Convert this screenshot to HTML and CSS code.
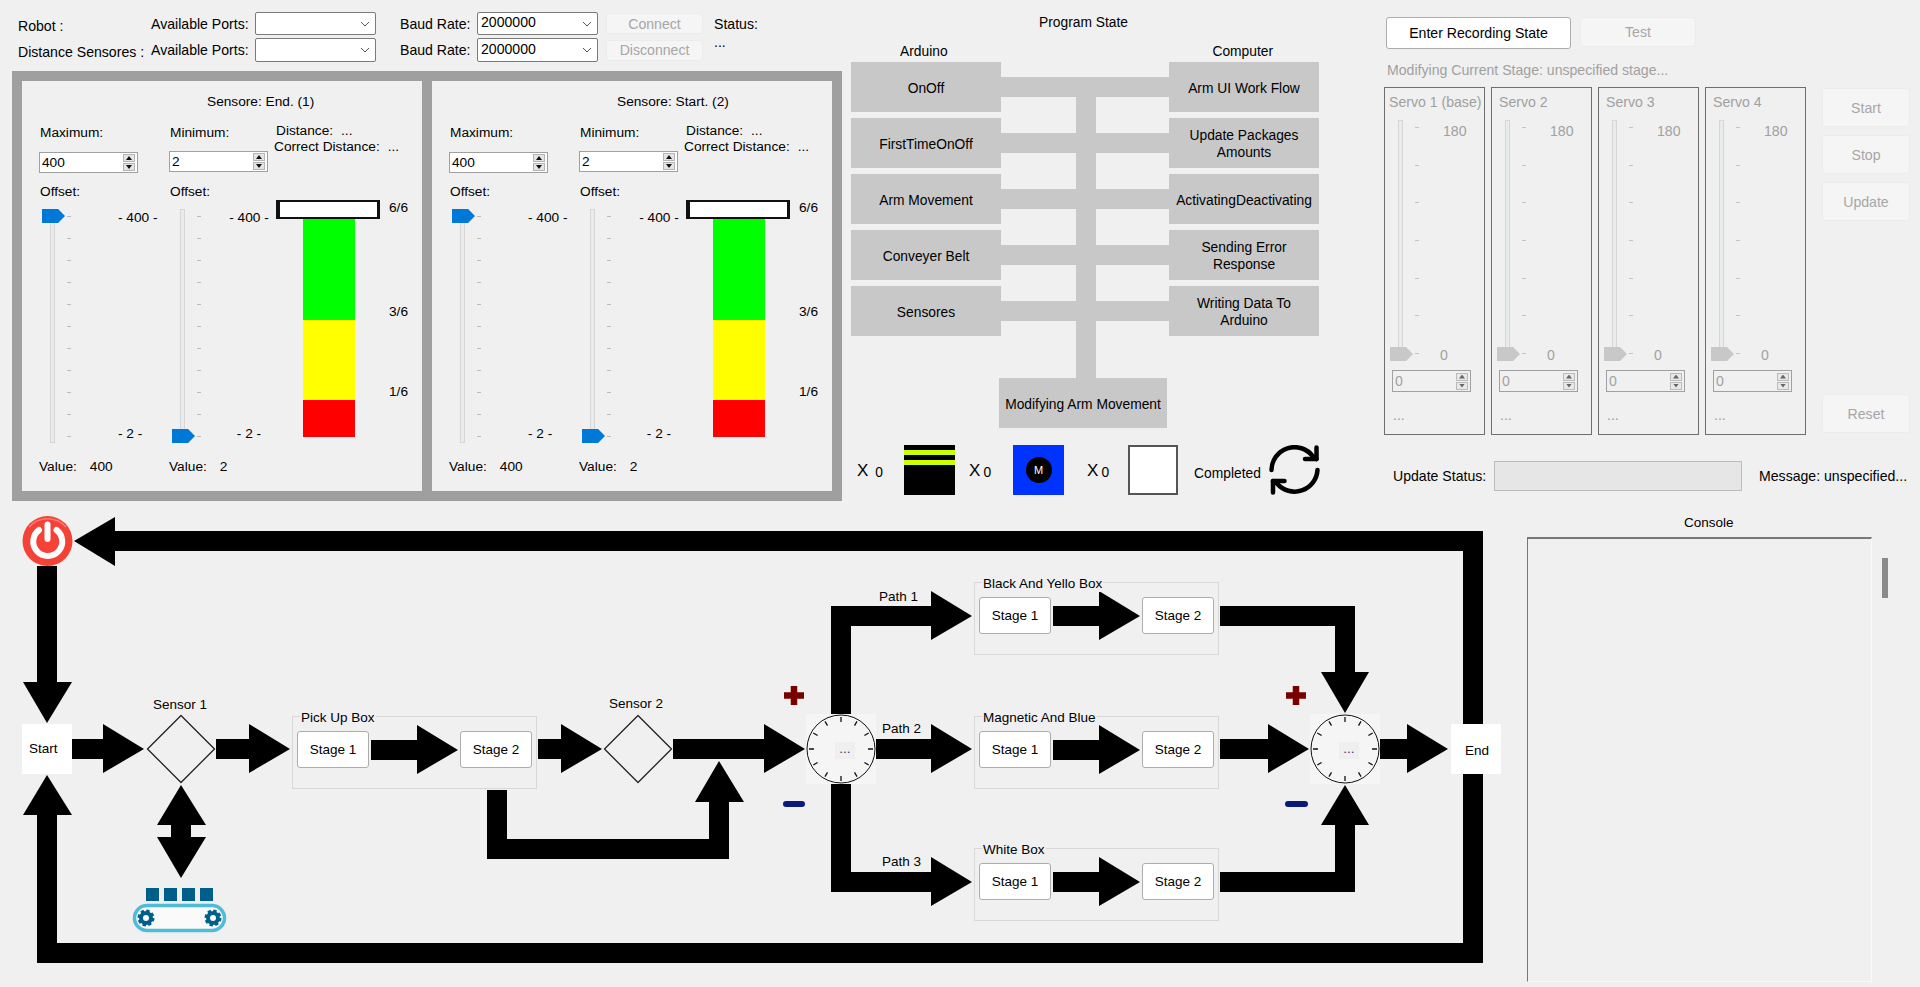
FILE: index.html
```html
<!DOCTYPE html>
<html>

<head>
    <meta http-equiv="Content-Type" content="text/html; charset=utf-8">
    <title>Robot Arm Control</title>
    <link rel="stylesheet" href="styles.css">
</head>

<body>
    <div class="top">
        <div class="left">
            <div class="conn">
                <span class="conn-name">Robot :</span>
                <span>Available Ports:</span>
                <div class="select"><svg class="chev" viewBox="0 0 10 6"><path d="M1 1l4 4 4-4"/></svg></div>
                <span class="baud">Baud Rate:</span>
                <div class="select">2000000<svg class="chev" viewBox="0 0 10 6"><path d="M1 1l4 4 4-4"/></svg></div>
                <button class="btn off conn-btn">Connect</button>
                <span class="status">Status:</span>

                <span class="conn-name">Distance Sensores :</span>
                <span>Available Ports:</span>
                <div class="select"><svg class="chev" viewBox="0 0 10 6"><path d="M1 1l4 4 4-4"/></svg></div>
                <span class="baud">Baud Rate:</span>
                <div class="select">2000000<svg class="chev" viewBox="0 0 10 6"><path d="M1 1l4 4 4-4"/></svg></div>
                <button class="btn off conn-btn">Disconnect</button>
                <span class="status status-val">...</span>
            </div>

            <div class="sensors">
                <div class="sensor">
                    <div class="sensor-title">Sensore: End. (1)</div>
                    <div class="sensor-body">
                        <div class="axis">
                            <div class="cap">Maximum:</div>
                            <div class="spin"><span>400</span><span class="spin-arrows"><i class="up"></i><i class="down"></i></span></div>
                            <div class="cap offset">Offset:</div>
                            <div class="slider">
                                <div class="track"></div>
                                <div class="ticks"></div>
                                <div class="thumb"></div>
                                <div class="scale"><span>- 400 -</span><span>- 2 -</span></div>
                            </div>
                            <div class="value">Value:<span>400</span></div>
                        </div>
                        <div class="axis axis-min">
                            <div class="cap">Minimum:</div>
                            <div class="spin"><span>2</span><span class="spin-arrows"><i class="up"></i><i class="down"></i></span></div>
                            <div class="cap offset">Offset:</div>
                            <div class="slider">
                                <div class="track"></div>
                                <div class="ticks"></div>
                                <div class="thumb low"></div>
                                <div class="scale"><span>- 400 -</span><span>- 2 -</span></div>
                            </div>
                            <div class="value">Value:<span>2</span></div>
                        </div>
                        <div class="reading">
                            <div class="dist">Distance:<span>...</span></div>
                            <div class="dist correct">Correct Distance:<span>...</span></div>
                            <div class="gauge">
                                <div class="gauge-head"></div><div class="gauge-label">6/6</div>
                                <div class="bar green"></div><div class="gauge-label">3/6</div>
                                <div class="bar yellow"></div><div class="gauge-label">1/6</div>
                                <div class="bar red"></div>
                            </div>
                        </div>
                    </div>
                </div>

                <div class="sensor">
                    <div class="sensor-title">Sensore: Start. (2)</div>
                    <div class="sensor-body">
                        <div class="axis">
                            <div class="cap">Maximum:</div>
                            <div class="spin"><span>400</span><span class="spin-arrows"><i class="up"></i><i class="down"></i></span></div>
                            <div class="cap offset">Offset:</div>
                            <div class="slider">
                                <div class="track"></div>
                                <div class="ticks"></div>
                                <div class="thumb"></div>
                                <div class="scale"><span>- 400 -</span><span>- 2 -</span></div>
                            </div>
                            <div class="value">Value:<span>400</span></div>
                        </div>
                        <div class="axis axis-min">
                            <div class="cap">Minimum:</div>
                            <div class="spin"><span>2</span><span class="spin-arrows"><i class="up"></i><i class="down"></i></span></div>
                            <div class="cap offset">Offset:</div>
                            <div class="slider">
                                <div class="track"></div>
                                <div class="ticks"></div>
                                <div class="thumb low"></div>
                                <div class="scale"><span>- 400 -</span><span>- 2 -</span></div>
                            </div>
                            <div class="value">Value:<span>2</span></div>
                        </div>
                        <div class="reading">
                            <div class="dist">Distance:<span>...</span></div>
                            <div class="dist correct">Correct Distance:<span>...</span></div>
                            <div class="gauge">
                                <div class="gauge-head"></div><div class="gauge-label">6/6</div>
                                <div class="bar green"></div><div class="gauge-label">3/6</div>
                                <div class="bar yellow"></div><div class="gauge-label">1/6</div>
                                <div class="bar red"></div>
                            </div>
                        </div>
                    </div>
                </div>
            </div>
        </div>

        <div class="state">
            <div class="state-title">Program State</div>
            <div class="state-heads"><span>Arduino</span><span>Computer</span></div>
            <div class="state-grid">
                <div class="trunk"></div>
                <div class="box">OnOff</div><div class="link"></div><div class="box">Arm UI Work Flow</div>
                <div class="box">FirstTimeOnOff</div><div class="link"></div><div class="box">Update Packages<br>Amounts</div>
                <div class="box">Arm Movement</div><div class="link"></div><div class="box">ActivatingDeactivating</div>
                <div class="box">Conveyer Belt</div><div class="link"></div><div class="box">Sending Error<br>Response</div>
                <div class="box">Sensores</div><div class="link"></div><div class="box">Writing Data To<br>Arduino</div>
                <div class="box box-mod">Modifying Arm Movement</div>
            </div>
            <div class="counts">
                <span class="x">X</span><span class="n">0</span>
                <div class="piece piece-yellow"></div>
                <span class="x">X</span><span class="n tight">0</span>
                <div class="piece piece-blue"><b>M</b></div>
                <span class="x">X</span><span class="n tight">0</span>
                <div class="piece piece-white"></div>
                <span class="done">Completed</span>
                <svg class="refresh" viewBox="0 0 51 50">
                    <path d="M2.5 25A23 23 0 0 1 44 11.5L47.5 14"/>
                    <path d="M48.5 25A23 23 0 0 1 8 38.5L4 36"/>
                    <path d="M47.5 2.5V14H36"/>
                    <path d="M4 47.5V36H15.5"/>
                </svg>
            </div>
        </div>

        <div class="record">
            <div class="rec-btns">
                <button class="btn rec-main">Enter Recording State</button>
                <button class="btn off rec-test">Test</button>
            </div>
            <div class="rec-stage">Modifying Current Stage: unspecified stage...</div>
            <div class="rec-main-row">
                <div class="servo">
                    <div class="servo-title first">Servo 1 (base)</div>
                    <div class="slider servo-slider">
                        <div class="track"></div>
                        <div class="ticks"></div>
                        <div class="thumb low"></div>
                        <div class="scale"><span>180</span><span>0</span></div>
                    </div>
                    <div class="spin"><span>0</span><span class="spin-arrows"><i class="up"></i><i class="down"></i></span></div>
                    <div class="servo-val">...</div>
                </div>
                <div class="servo">
                    <div class="servo-title">Servo 2</div>
                    <div class="slider servo-slider">
                        <div class="track"></div>
                        <div class="ticks"></div>
                        <div class="thumb low"></div>
                        <div class="scale"><span>180</span><span>0</span></div>
                    </div>
                    <div class="spin"><span>0</span><span class="spin-arrows"><i class="up"></i><i class="down"></i></span></div>
                    <div class="servo-val">...</div>
                </div>
                <div class="servo">
                    <div class="servo-title">Servo 3</div>
                    <div class="slider servo-slider">
                        <div class="track"></div>
                        <div class="ticks"></div>
                        <div class="thumb low"></div>
                        <div class="scale"><span>180</span><span>0</span></div>
                    </div>
                    <div class="spin"><span>0</span><span class="spin-arrows"><i class="up"></i><i class="down"></i></span></div>
                    <div class="servo-val">...</div>
                </div>
                <div class="servo">
                    <div class="servo-title">Servo 4</div>
                    <div class="slider servo-slider">
                        <div class="track"></div>
                        <div class="ticks"></div>
                        <div class="thumb low"></div>
                        <div class="scale"><span>180</span><span>0</span></div>
                    </div>
                    <div class="spin"><span>0</span><span class="spin-arrows"><i class="up"></i><i class="down"></i></span></div>
                    <div class="servo-val">...</div>
                </div>
                <div class="side-btns">
                    <button class="btn off">Start</button>
                    <button class="btn off">Stop</button>
                    <button class="btn off">Update</button>
                    <button class="btn off side-reset">Reset</button>
                </div>
            </div>
            <div class="rec-status">
                <span class="status-label">Update Status:</span>
                <div class="progress"></div>
                <span class="message">Message: unspecified...</span>
            </div>
        </div>
    </div>

    <div class="bottom">
        <div class="flow">
            <svg class="wires" viewBox="0 505 1510 482">
                <defs>
                    <g id="dial">
                        <rect x="-35" y="-35" width="70" height="70" fill="#f5f5f5"/>
                        <circle r="34" fill="#f5f5f5" stroke="#111" stroke-width="1"/>
                        <g stroke="#111" stroke-width="1.3">
                            <path d="M0-32V-27M0 32V27M-32 0H-27M32 0H27"/>
                            <path d="M16-27.7L13.5-23.4M27.7-16L23.4-13.5M27.7 16L23.4 13.5M16 27.7L13.5 23.4"/>
                            <path d="M-16-27.7L-13.5-23.4M-27.7-16L-23.4-13.5M-27.7 16L-23.4 13.5M-16 27.7L-13.5 23.4"/>
                        </g>
                    </g>
                </defs>

                <!-- main loop -->
                <path d="M74 541L115 517V531H1483V963H37V815H23L47 775L72 815H57V943H1463V551H115V566Z"/>
                <path d="M37 566H57V682H72L47 723L23 682H37Z"/>
                <path d="M72 739H103V724L144 749L103 773V759H72Z"/>
                <path d="M216 739H249V724L290 749L249 773V759H216Z"/>
                <path d="M181 785L206 825H191V837H206L181 878L157 837H171V825H157Z"/>
                <path d="M371 740H417V725L458 750L417 774V760H371Z"/>
                <path d="M538 739H561V724L602 749L561 773V759H538Z"/>
                <path d="M673 739H764V724L805 749L764 773V759H673Z"/>
                <path d="M487 790H507V839H709V802H695L719 761L744 802H729V859H487Z"/>

                <!-- paths -->
                <path d="M831 714V606H931V591L972 616L931 640V626H851V714Z"/>
                <path d="M876 739H931V724L972 749L931 773V759H876Z"/>
                <path d="M831 784H851V872H931V857L972 882L931 906V892H831Z"/>
                <path d="M1053 606H1099V591L1140 616L1099 640V626H1053Z"/>
                <path d="M1053 740H1099V725L1140 750L1099 774V760H1053Z"/>
                <path d="M1053 872H1099V857L1140 882L1099 906V892H1053Z"/>
                <path d="M1220 606H1355V672H1369L1345 713L1321 672H1335V626H1220Z"/>
                <path d="M1220 739H1268V724L1309 749L1268 773V759H1220Z"/>
                <path d="M1220 892V872H1335V825H1321L1345 785L1369 825H1355V892Z"/>
                <path d="M1379 739H1407V724L1448 749L1407 773V759H1379Z"/>

                <!-- sensors -->
                <path class="diamond" d="M181 715.5L214.5 749L181 782.5L147.5 749Z"/>
                <path class="diamond" d="M638 715.5L671.5 749L638 782.5L604.5 749Z"/>

                <use href="#dial" x="841" y="749"/>
                <use href="#dial" x="1345" y="749"/>

                <path class="plus" d="M784 695.5H804M794 686V705"/>
                <path class="plus" d="M1286 695.5H1306M1296 686V705"/>
                <path class="minus" d="M786 804H802"/>
                <path class="minus" d="M1288 804H1305"/>

                <!-- power button -->
                <circle cx="47.5" cy="541" r="25" fill="#f44336"/>
                <path d="M29 527A25 25 0 0 1 66 527" fill="none" stroke="#f77" stroke-width="1.5"/>
                <path class="power" d="M39 530A14.5 14.5 0 1 0 56.5 530M47.5 524.5V539"/>

                <!-- conveyor -->
                <rect class="belt-box" x="146" y="888" width="13" height="13"/>
                <rect class="belt-box" x="164" y="888" width="13" height="13"/>
                <rect class="belt-box" x="182" y="888" width="13" height="13"/>
                <rect class="belt-box" x="200" y="888" width="13" height="13"/>
                <rect class="belt" x="134.5" y="905.5" width="90" height="25" rx="12.5"/>
                <circle class="gear" cx="146" cy="918" r="5"/>
                <circle class="gear-teeth" cx="146" cy="918" r="7"/>
                <circle class="gear" cx="213" cy="918" r="5"/>
                <circle class="gear-teeth" cx="213" cy="918" r="7"/>
            </svg>

            <div class="node term n-start">Start</div>
            <div class="node term n-end">End</div>
            <div class="node tag n-s1">Sensor 1</div>
            <div class="node tag n-s2">Sensor 2</div>
            <div class="node tag n-p1">Path 1</div>
            <div class="node tag n-p2">Path 2</div>
            <div class="node tag n-p3">Path 3</div>
            <div class="node dot n-d1">...</div>
            <div class="node dot n-d2">...</div>

            <div class="node group g-pick">
                <span class="legend">Pick Up Box</span>
                <button class="btn stage">Stage 1</button><button class="btn stage">Stage 2</button>
            </div>
            <div class="node group g-black">
                <span class="legend">Black And Yello Box</span>
                <button class="btn stage">Stage 1</button><button class="btn stage">Stage 2</button>
            </div>
            <div class="node group g-blue">
                <span class="legend">Magnetic And Blue</span>
                <button class="btn stage">Stage 1</button><button class="btn stage">Stage 2</button>
            </div>
            <div class="node group g-white">
                <span class="legend">White Box</span>
                <button class="btn stage">Stage 1</button><button class="btn stage">Stage 2</button>
            </div>
        </div>

        <div class="console">
            <div class="console-title">Console</div>
            <div class="console-row">
                <div class="console-box"></div>
                <div class="console-scroll"></div>
            </div>
        </div>
    </div>
</body>
</html>
```

FILE: styles.css
```css
* {
    box-sizing: border-box;
}

html,
body {
    margin: 0;
    height: 100%;
}

body {
    width: 1920px;
    height: 987px;
    overflow: hidden;
    background: #f0f0f0;
    color: #000;
    font: 13.5px/16px "Liberation Sans", Arial, sans-serif;
}

.top {
    display: flex;
    height: 505px;
}

.bottom {
    display: flex;
    height: 482px;
}

/* buttons */
.btn {
    display: block;
    padding: 0;
    background: #fff;
    border: 1px solid #adadad;
    border-radius: 3px;
    color: #000;
    font: inherit;
}

.btn.off {
    background: #f5f5f5;
    border-color: #ececec;
    color: #a6a6a6;
}

/* connection row */
.left {
    width: 842px;
    padding: 12px 0 0 12px;
}

.conn {
    display: grid;
    grid-template-columns: 133px 104px 121px 24px 77px 121px 97px auto;
    grid-template-rows: 23px 24px;
    row-gap: 3px;
    align-items: center;
    height: 50px;
    padding-left: 6px;
    font-size: 14.1px;
}

.conn-name {
    padding-top: 4px;
    white-space: nowrap;
}

.select {
    display: flex;
    align-items: center;
    justify-content: space-between;
    height: 100%;
    padding: 0 5px 3px 3px;
    background: #fff;
    border: 1px solid #7a7a7a;
    border-radius: 2px;
}

.chev {
    width: 10px;
    height: 6px;
    margin-left: auto;
    margin-top: 3px;
    fill: none;
    stroke: #555;
}

.baud {
    grid-column: 5;
}

.conn-btn {
    height: 21px;
    margin-left: 8px;
    width: 97px;
}

.status {
    margin-left: 19px;
}

.status-val {
    padding-bottom: 16px;
}

/* distance sensors */
.sensors {
    display: flex;
    gap: 10px;
    width: 830px;
    height: 430px;
    margin-top: 9px;
    padding: 10px;
    background: #9f9f9f;
}

.sensor {
    width: 400px;
    padding: 11px 0 0 18px;
    background: #f0f0f0;
    font-size: 13.7px;
}

.sensor-title {
    height: 20px;
    margin-left: 167px;
    line-height: 20px;
}

.sensor-body {
    display: grid;
    grid-template-columns: 130px 104px auto;
    margin-top: 11px;
}

.cap {
    height: 20px;
    line-height: 20px;
}

.offset {
    margin-top: 9px;
}

.spin {
    display: flex;
    align-items: center;
    justify-content: space-between;
    width: 99px;
    height: 21px;
    margin: 9px 0 0 -1px;
    padding-left: 2px;
    background: #fff;
    border: 1px solid #a0a0a0;
}

.axis-min .spin {
    margin-top: 8px;
}

.axis-min .offset {
    margin-top: 10px;
}

.spin-arrows {
    display: flex;
    flex-direction: column;
    gap: 1px;
    margin-right: 2px;
}

.spin-arrows i {
    position: relative;
    display: block;
    width: 12px;
    height: 8px;
    background: #e4e4e4;
    border: 1px solid #b4b4b4;
}

.spin-arrows i::after {
    content: "";
    position: absolute;
    left: 2px;
    top: 1px;
    width: 6px;
    height: 4px;
    background: #111;
}

.spin-arrows .up::after {
    clip-path: polygon(50% 0, 100% 100%, 0 100%);
}

.spin-arrows .down::after {
    clip-path: polygon(0 0, 100% 0, 50% 100%);
}

/* sliders */
.slider {
    position: relative;
    display: flex;
    height: 234px;
    margin-top: 7px;
}

.track {
    width: 5px;
    margin-left: 10px;
    background: #e9ecec;
    border: 1px solid #d6d6d6;
}

.ticks {
    width: 4px;
    height: 221px;
    margin: 7px 0 0 12px;
    background: repeating-linear-gradient(#bcbcbc 0 1px, transparent 1px 22px);
}

.thumb {
    position: absolute;
    left: 2px;
    top: 0;
    width: 23px;
    height: 14px;
    background: #0078d7;
    clip-path: polygon(0 0, 70% 0, 100% 50%, 70% 100%, 0 100%);
}

.thumb.low {
    top: 220px;
}

.scale {
    display: flex;
    flex-direction: column;
    justify-content: space-between;
    align-items: flex-start;
    margin-left: 47px;
    padding: 1px 0;
    white-space: nowrap;
}

.axis-min .scale {
    align-items: center;
    width: 42px;
    margin-left: 27px;
}

.value {
    margin-top: 16px;
    margin-left: -1px;
    line-height: 16px;
}

.value span {
    margin-left: 13px;
}

/* gauge */
.dist {
    margin-left: 2px;
    white-space: nowrap;
}

.dist span {
    margin-left: 8px;
}

.correct {
    margin-left: 0;
}

.gauge {
    display: grid;
    grid-template-columns: 104px auto;
    grid-template-rows: 19px 101px 80px 37px;
    column-gap: 9px;
    margin: 45px 0 0 2px;
}

.gauge-head {
    background: #fff;
    border: 2px solid #111;
    border-left-width: 4px;
    border-right-width: 3px;
}

.gauge-label {
    align-self: end;
    white-space: nowrap;
}

.gauge-head + .gauge-label {
    align-self: start;
}

.bar {
    width: 52px;
    margin-left: 27px;
}

.green { background: #0f0; }
.yellow { background: #ff0; }
.red { background: #f00; }

/* program state */
.state {
    width: 468px;
    margin-left: 9px;
    padding-top: 15px;
    font-size: 13.8px;
}

.state-title {
    height: 16px;
    text-align: center;
    margin-left: -3px;
}

.state-heads {
    display: flex;
    justify-content: space-between;
    height: 16px;
    margin-top: 13px;
    padding: 0 46px 0 49px;
}

.state-grid {
    position: relative;
    display: grid;
    grid-template-columns: 150px 168px 150px;
    grid-template-rows: repeat(5, 50px) 86px;
    row-gap: 6px;
    margin-top: 2px;
}

.trunk {
    position: absolute;
    left: 225px;
    top: 35px;
    width: 20px;
    height: 281px;
    background: #c8c8c8;
}

.box {
    display: flex;
    align-items: center;
    justify-content: center;
    padding-top: 2px;
    background: #c8c8c8;
    line-height: 17px;
    text-align: center;
    white-space: nowrap;
}

.link {
    align-self: center;
    height: 20px;
    background: #c8c8c8;
}

.box-mod {
    grid-column: 2;
    grid-row: 6;
    align-self: end;
    height: 50px;
    margin: 0 2px 0 -2px;
}

.counts {
    display: flex;
    align-items: center;
    height: 50px;
    margin-top: 17px;
    padding-left: 6px;
}

.x {
    font-size: 17px;
    margin-top: 2px;
}

.n {
    margin: 6px 0 0 7px;
}

.n.tight {
    margin-left: 3px;
}

.piece {
    flex: none;
    width: 51px;
    height: 50px;
    margin: 0 14px 0 21px;
}

.piece-yellow {
    background:
        linear-gradient(#000 5px, #ccff00 5px 10px, #000 10px 15px, #ccff00 15px 20px, #000 20px);
}

.piece-blue {
    display: flex;
    align-items: center;
    justify-content: center;
    margin: 0 23px 0 22px;
    background: #0033ff;
}

.piece-blue b {
    width: 26px;
    height: 26px;
    background: #000;
    border-radius: 50%;
    color: #fff;
    font-size: 11px;
    font-weight: 400;
    line-height: 26px;
    text-align: center;
}

.piece-white {
    width: 50px;
    margin: 0 16px 0 19px;
    background: #fff;
    border: 2px solid #555;
}

.done {
    white-space: nowrap;
    margin-top: 8px;
}

.refresh {
    flex: none;
    width: 51px;
    height: 50px;
    margin-left: 8px;
    fill: none;
    stroke: #000;
    stroke-width: 4.5;
    stroke-linecap: round;
    stroke-linejoin: round;
}

/* recording */
.record {
    width: 536px;
    margin-left: 65px;
    padding-top: 17px;
    font-size: 14.1px;
}

.rec-btns {
    display: flex;
    gap: 9px;
    padding-left: 2px;
}

.rec-main {
    width: 185px;
    height: 32px;
}

.rec-test {
    width: 116px;
    height: 30px;
}

.rec-stage {
    margin: 13px 0 0 3px;
    color: #a0a0a0;
}

.rec-main-row {
    display: flex;
    gap: 6px;
    height: 348px;
    margin-top: 9px;
}

.servo {
    width: 101px;
    padding-top: 6px;
    border: 1px solid #6e6e6e;
    color: #a0a0a0;
}

.servo-title {
    margin-left: 7px;
    white-space: nowrap;
}

.servo-title.first {
    margin-left: 4px;
}

.servo-slider {
    height: 241px;
    margin-top: 10px;
}

.servo-slider .track {
    margin-left: 13px;
    height: 230px;
}

.servo-slider .ticks {
    height: 227px;
    margin: 7px 0 0 12px;
    background: repeating-linear-gradient(#c4c4c4 0 1px, transparent 1px 37.67px);
}

.servo-slider .thumb,
.servo-slider .thumb.low {
    top: 227px;
    left: 5px;
    background: #c8c8c8;
}

.servo-slider .scale {
    margin-left: 21px;
    padding: 3px 0 0;
    height: 243px;
}

.servo-slider .scale span:first-child {
    margin-left: 3px;
}

.servo .spin {
    width: 79px;
    height: 22px;
    margin: 9px 0 0 7px;
    background: transparent;
}

.servo .spin-arrows i {
    background: #e8e8e8;
    border-color: #bbb;
}

.servo .spin-arrows i::after {
    background: #666;
}

.servo-val {
    margin: 15px 0 0 8px;
}

.side-btns {
    display: flex;
    flex-direction: column;
    gap: 8px;
    width: 88px;
    margin: 1px 0 2px 10px;
}

.side-btns .btn {
    height: 39px;
}

.side-btns .side-reset {
    margin-top: auto;
}

.rec-status {
    display: flex;
    align-items: center;
    height: 30px;
    margin-top: 26px;
    padding-left: 9px;
}

.status-label {
    flex: none;
    width: 93px;
    white-space: nowrap;
}

.progress {
    flex: none;
    width: 248px;
    height: 30px;
    margin-left: 8px;
    background: #e6e6e6;
    border: 1px solid #bcbcbc;
}

.message {
    margin-left: 17px;
    white-space: nowrap;
}

/* flow diagram: nodes sit at their own place on the canvas */
.flow {
    position: relative;
    width: 1510px;
    height: 482px;
}

.wires {
    position: absolute;
    left: 0;
    top: 0;
    width: 1510px;
    height: 482px;
}

.diamond {
    fill: #f0f0f0;
    stroke: #222;
    stroke-width: 1.3;
    stroke-linejoin: round;
}

.plus {
    fill: none;
    stroke: #7a0000;
    stroke-width: 6.5;
}

.minus {
    fill: none;
    stroke: #0a1a78;
    stroke-width: 6;
    stroke-linecap: round;
}

.power {
    fill: none;
    stroke: #fff;
    stroke-width: 6;
    stroke-linecap: round;
}

.belt-box {
    fill: #005f8a;
}

.belt {
    fill: #fafafa;
    stroke: #4dbcd8;
    stroke-width: 3.5;
}

.gear {
    fill: none;
    stroke: #005f8a;
    stroke-width: 4;
}

.gear-teeth {
    fill: none;
    stroke: #005f8a;
    stroke-width: 3;
    stroke-dasharray: 3.3 2.2;
}

.node {
    position: absolute;
    white-space: nowrap;
}

.term {
    width: 50px;
    height: 50px;
    background: #fff;
    line-height: 50px;
}

.n-start { left: 22px; top: 219px; padding-left: 7px; }
.n-end { left: 1451px; top: 219px; padding-left: 14px; line-height: 54px; }
.n-s1 { left: 153px; top: 192px; }
.n-s2 { left: 609px; top: 191px; }
.n-p1 { left: 879px; top: 84px; }
.n-p2 { left: 882px; top: 216px; }
.n-p3 { left: 882px; top: 349px; }

.dot {
    width: 20px;
    height: 17px;
    background: #efefef;
    color: #1a3c78;
    line-height: 14px;
    text-align: center;
}

.n-d1 { left: 835px; top: 237px; }
.n-d2 { left: 1339px; top: 237px; }

.group {
    display: flex;
    justify-content: space-between;
    width: 245px;
    height: 73px;
    padding: 14px 4px 0;
    border: 1px solid #d8d8d8;
}

.legend {
    position: absolute;
    left: 7px;
    top: -7px;
    padding: 0 1px;
    background: #f0f0f0;
}

.stage {
    width: 72px;
    height: 37px;
    font-size: 13.5px;
    padding-top: 1px;
}

.g-pick { left: 292px; top: 211px; }
.g-black { left: 974px; top: 77px; }
.g-blue { left: 974px; top: 211px; }
.g-white { left: 974px; top: 343px; }

/* console */
.console {
    margin-left: 17px;
}

.console-title {
    height: 16px;
    margin: 10px 0 0 157px;
}

.console-row {
    display: flex;
    margin-top: 6px;
}

.console-box {
    width: 345px;
    height: 445px;
    border: 1px solid #f9f9f9;
    border-top: 2px solid #777;
    border-left: 1px solid #777;
}

.console-scroll {
    width: 6px;
    height: 40px;
    margin: 21px 0 0 10px;
    background: #8a8a8a;
}
```
